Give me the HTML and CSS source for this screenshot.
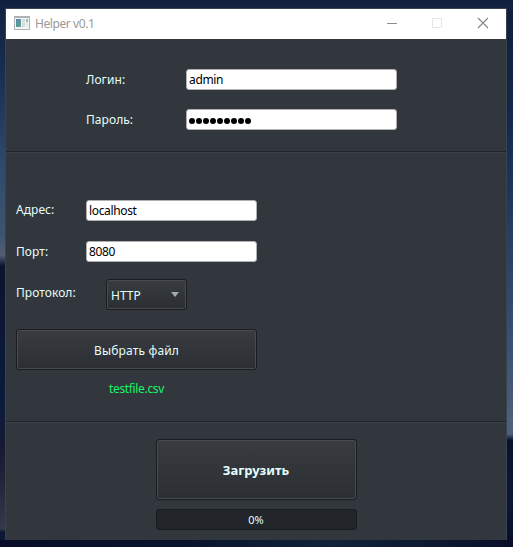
FILE: index.html
```html
<!DOCTYPE html>
<html lang="ru">
<head>
<meta charset="utf-8">
<title>Helper v0.1</title>
<link rel="stylesheet" href="styles.css">
</head>
<body>
<main class="window">
  <header class="titlebar">
    <svg class="app-icon" width="16" height="14" viewBox="0 0 16 14">
      <defs><linearGradient id="pane" x2="1" y2="1"><stop stop-color="#5d82b5"/><stop offset="1" stop-color="#58ad80"/></linearGradient></defs>
      <path fill="#aeb2b6" d="M0 0h16v14H0z"/><path fill="#f4f5f6" d="M1 2h14v11H1z"/>
      <path fill="url(#pane)" d="M2 3h5v8H2z"/><path fill="#d9dcde" d="M8 3h3v8H8z"/><path fill="#e3e7e5" d="M12 3h2v8h-2z"/><path fill="#8dc3a7" d="M12 3h2v3h-2z"/>
    </svg>
    <span class="title">Helper v0.1</span>
    <svg class="controls" width="138" height="30" viewBox="0 0 138 30" fill="none">
      <path stroke="#8c8c8c" d="M19 14.5h10"/>
      <path stroke="#e7e7e7" d="M64.5 9.5h9v9h-9z"/>
      <path stroke="#858585" stroke-width="1.1" d="M110 9l10 10M120 9l-10 10"/>
    </svg>
  </header>
  <section class="credentials">
    <label for="login">Логин:</label><input id="login" value="admin">
    <label for="password">Пароль:</label>
    <div class="field dots" id="password"><i></i><i></i><i></i><i></i><i></i><i></i><i></i><i></i><i></i></div>
  </section>
  <section class="connection">
    <div class="row address"><label for="address">Адрес:</label><input id="address" value="localhost"></div>
    <div class="row port"><label for="port">Порт:</label><input id="port" value="8080"></div>
    <div class="row protocol"><span class="label">Протокол:</span>
      <button class="select"><span>HTTP</span><svg width="8" height="5" viewBox="0 0 8 5"><path fill="#a0adac" d="M0 0h8L4 5z"/></svg></button>
    </div>
    <button class="choose"><span>Выбрать файл</span></button>
    <p class="filename"><span>testfile.csv</span></p>
  </section>
  <section class="upload">
    <button class="submit"><span>Загрузить</span></button>
    <div class="progress">0%</div>
  </section>
</main>
</body>
</html>
```
FILE: styles.css
```css
* { box-sizing: border-box; }
body {
  margin: 0;
  height: 547px;
  padding: 8px 6px 7px 5px;
  overflow: hidden;
  font: 12px/16px "Noto Sans", "Open Sans", sans-serif;
  color: #e4fffc;
  background:
    linear-gradient(#101f40, #14233f) 0 0 / 100% 8px no-repeat,
    linear-gradient(90deg, #070d27, #09122d 35%, #12223a 65%, #090f29) 0 540px / 100% 7px no-repeat,
    linear-gradient(#12203f 0, #193052 80px, #304b6b 170px, #3c5471 235px, #555e72 255px, #0b142e 266px, #0b1b3d 400px, #171a31 450px, #343849 529px, #0c1734 532px) 0 0 / 6px 100% no-repeat,
    linear-gradient(#101f3d 0, #122747 110px, #26405f 240px, #354f70 330px, #50617c 434px, #0a132b 440px, #0b1836 500px, #070e26 547px) 100% 0 / 8px 100% no-repeat,
    #101b36;
}
.window {
  width: 502px;
  height: 532px;
  border: 1px solid #39434e;
  border-bottom: 0;
  background: #32363d;
}
.titlebar {
  height: 30px;
  display: flex;
  align-items: center;
  padding-left: 8px;
  background: #fff;
  color: #999;
}
.app-icon { margin-right: 5px; margin-bottom: 2px; }
.title { letter-spacing: -.42px; }
.controls { margin-left: auto; }

.credentials {
  height: 113px;
  padding: 30px 0 0 80px;
  display: grid;
  grid-template: 21px 21px / 100px 211px;
  row-gap: 19px;
  border-bottom: 1px solid #202328;
}
label, .label { line-height: 21px; letter-spacing: .06px; }
input, .field {
  width: 100%;
  height: 21px;
  padding: 0 2px;
  border: 1px solid #aeb0b2;
  border-radius: 3px;
  background: #fff;
  color: #000;
  font: inherit;
  outline: 0;
}
input { letter-spacing: -.35px; }
.dots { display: flex; align-items: center; gap: 1px; padding-top: 2px; }
.dots i { width: 6px; height: 6px; border-radius: 50%; background: #000; }

.connection {
  height: 270px;
  padding: 47px 0 0 10px;
  border-top: 1px solid #3c4047;
  border-bottom: 1px solid #202328;
}
.row { display: grid; grid-template-columns: 70px 171px; height: 21px; }
.address label { margin-top: -1px; }
.port { margin-top: 20px; }
.protocol { grid-template-columns: 90px 81px; height: 31px; margin-top: 17px; }
.protocol .label { margin-top: 3px; }
button {
  display: flex;
  align-items: center;
  justify-content: center;
  padding: 0;
  border: 1px solid #1a1c1f;
  border-radius: 3px;
  box-shadow: inset 0 0 0 1px #484b50;
  background: linear-gradient(#383b40, #2b2e32);
  color: inherit;
  font: inherit;
}
.select { justify-content: space-between; padding: 2px 7px 0 4px; }
.select svg { margin-top: -3px; }
.choose { width: 241px; height: 41px; margin-top: 19px; padding-top: 2px; letter-spacing: .16px; }
.filename { width: 241px; margin: 11px 0 0; text-align: center; color: #16f466; letter-spacing: -.35px; }
.upload {
  padding-top: 16px;
  border-top: 1px solid #3c4047;
  display: flex;
  flex-direction: column;
  align-items: center;
}
.submit { width: 201px; height: 61px; font-size: 13px; font-weight: 700; padding-top: 1px; }
.progress {
  width: 201px;
  height: 21px;
  margin-top: 9px;
  border: 1px solid #1b1d20;
  border-radius: 3px;
  background: #222529;
  text-align: center;
  font-size: 11px;
  line-height: 20px;
}
```
